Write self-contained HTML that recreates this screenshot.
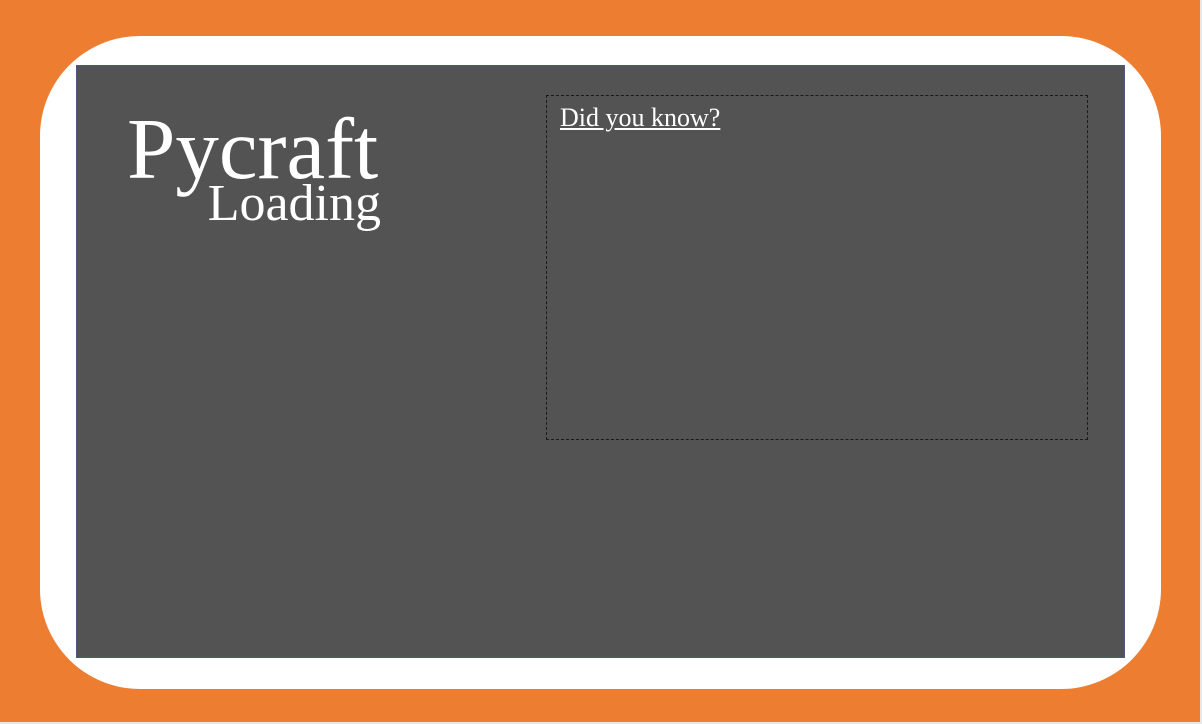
<!DOCTYPE html>
<html><head><style>
html,body{margin:0;padding:0;width:1202px;height:724px;overflow:hidden;background:#e8e8e8;}
.or{position:absolute;left:0;top:0;width:1200px;height:722px;background:#ED7D31;}
.wh{position:absolute;left:40px;top:36px;width:1121px;height:653px;background:#fff;border-radius:100px;}
.gr{position:absolute;left:76px;top:65px;width:1047px;height:591px;background:#535353;border:1px solid #4a5a78;}
.t{position:absolute;font-family:"Liberation Serif",serif;color:#fff;white-space:nowrap;}
.box{position:absolute;left:546px;top:95px;width:540px;height:343px;border:1px dashed #1a1a1a;}
</style></head><body>
<div class="or"></div>
<div class="wh"></div>
<div class="gr"></div>
<div class="t" style="left:127px;top:99px;font-size:87px;line-height:100px;">Pycraft</div>
<div class="t" style="right:821px;top:174px;font-size:52px;line-height:60px;">Loading</div>
<div class="box"></div>
<div class="t" style="left:560px;top:102px;font-size:26px;line-height:32px;text-decoration:underline;">Did you know?</div>
</body></html>
